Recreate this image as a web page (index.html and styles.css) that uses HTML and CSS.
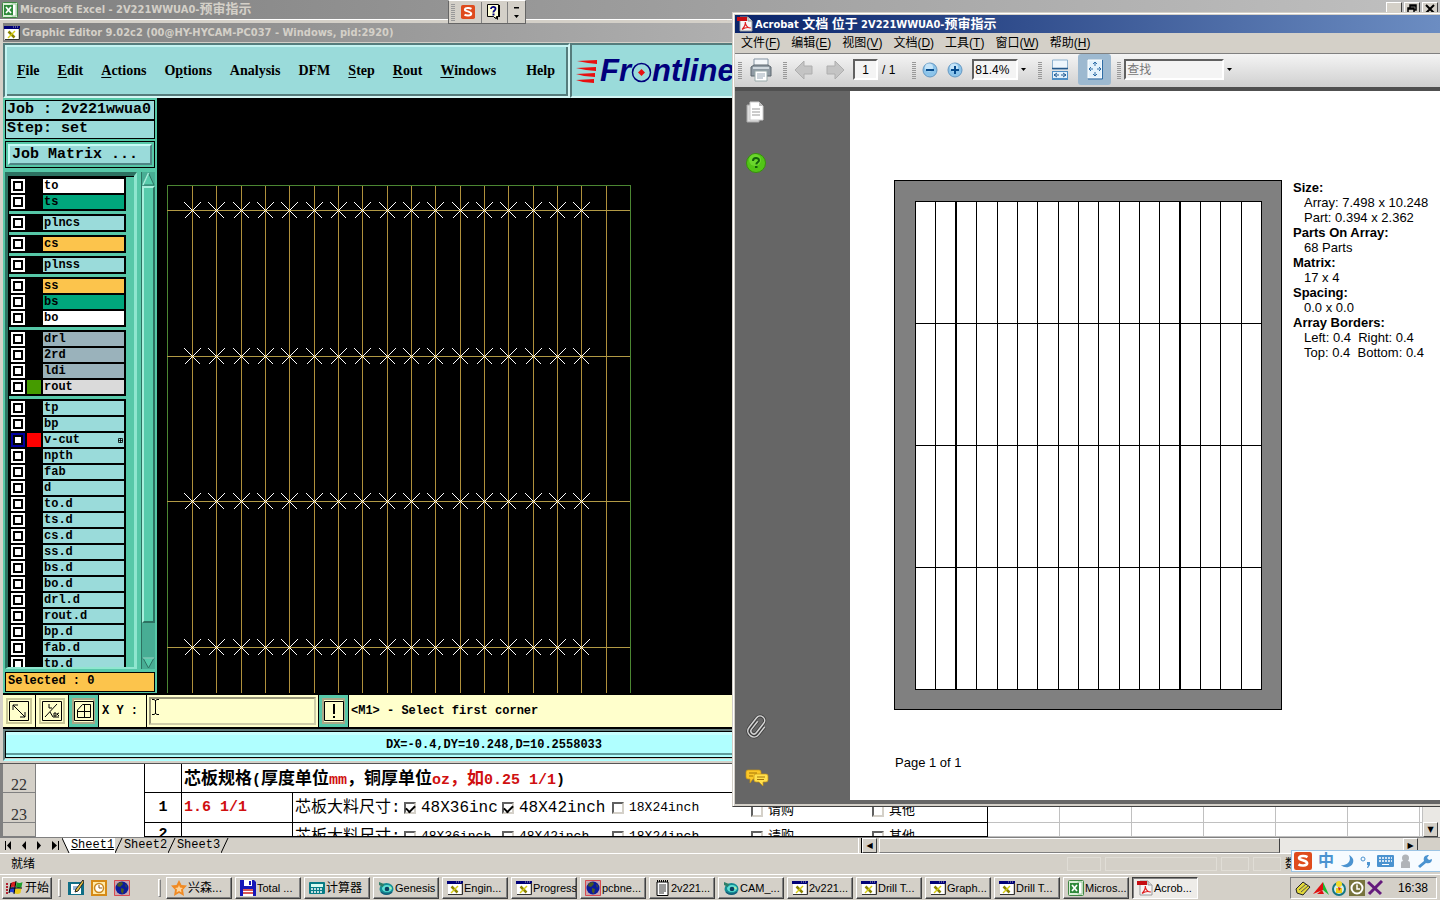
FILE: index.html
```html
<!DOCTYPE html>
<html lang="zh-CN">
<head>
<meta charset="utf-8">
<title>Desktop</title>
<link rel="stylesheet" href="styles.css">
</head>
<body>
<svg class="defs" aria-hidden="true">
  <symbol id="xwin" viewBox="0 0 16 14"><path d="M0 0h16v14H0z" fill="#d4d0c8"/><path d="M0 0h16v3H0z" fill="#000078"/><path d="M1 3h13v10H1z" fill="#fff"/><path d="M9 1h1M11 1h1M13 1h1" stroke="#aab"/><path d="M4.500 5.500l6 6" stroke="#8a8200" stroke-width="2.500"/><path d="M11 5l-7 7" stroke="#d6cd16" stroke-width="1.500"/><path d="M15.500 2v11.500H1" fill="none" stroke="#333"/></symbol>
  <symbol id="xls" viewBox="0 0 16 16"><rect x=".5" y=".5" width="15" height="15" rx="1" fill="#d9efd6" stroke="#3f8743"/><path d="M10 2h4v12h-4z" fill="#fff" stroke="#6aa66c" stroke-width=".6"/><path d="M2 3h9v10H2z" fill="#2f8a3b"/><path d="M4 5l5 6M9 5l-5 6" stroke="#fff" stroke-width="1.700"/></symbol>
  <symbol id="pdf" viewBox="0 0 16 16"><path d="M3 1h8l4 4v10H3z" fill="#f6f6f6" stroke="#9a9a9a"/><path d="M11 1v4h4" fill="#ddd" stroke="#999"/><path d="M0 1h10v4H0z" fill="#c60d12"/><path d="M5 13.500c2-2 3.500-5 3.300-7.500 0 3.500 2.500 6 5.500 6-3-1-6-.5-8.800 1.500z" fill="none" stroke="#e02020" stroke-width="1.100"/></symbol>
  <symbol id="globe" viewBox="0 0 16 16"><path d="M0 0h16v16H0z" fill="#c9a5ae"/><path d="M.5.5h15v15H.5z" fill="none" stroke="#d84a50"/><circle cx="8" cy="8" r="6.500" fill="#0b1b9a"/><path d="M4 3l4-1 1 2-3 3-3-1zM7 8l3 1-1 5-2-2zM11 4l2 2-1 2z" fill="#4a5a22"/></symbol>
  <symbol id="genesis" viewBox="0 0 16 16"><ellipse cx="8.500" cy="9" rx="7" ry="6" fill="#148c94"/><ellipse cx="9" cy="8.500" rx="5" ry="3.500" fill="#5fe0d4"/><circle cx="9" cy="9" r="2.300" fill="#0b4160"/><path d="M1 2l5 2-1 3-4-2z" fill="#2f7f68"/><path d="M3 12c3 3 8 3 11 0" stroke="#185b78" fill="none" stroke-width="1.500"/><path d="M11 7l3 1-2 1z" fill="#e6f089"/></symbol>
  <symbol id="sogou" viewBox="0 0 16 16"><rect width="16" height="16" rx="2" fill="#df4b1d"/><path d="M12 4.500C10 3.200 5 3 4.500 5.200 4.200 7.600 11.700 7 11.700 9.900 11.500 12.700 6 12.400 4 11" fill="none" stroke="#fff" stroke-width="2.300"/></symbol>
</svg>

<div class="desktop">
  <section class="excel">
    <header class="titlebar excel-title"><svg class="i16"><use href="#xls"/></svg><h1>Microsoft Excel - 2V221WWUA0-<span class="cjk">预审指示</span></h1>
      <div class="winbtns"><button aria-label="最小化"></button><button aria-label="还原"><svg width="11" height="10"><path d="M3 5V1h6v5H7M1 4h6v5H1zM3 2h6M1 5h6" fill="none" stroke="#000" stroke-width="1.500"/></svg></button><button aria-label="关闭"><svg width="10" height="10"><path d="M1 1l8 8M9 1l-8 8" stroke="#000" stroke-width="2"/></svg></button></div>
    </header>
    <div class="sheet">
      <div class="sheet-main">
      <table>
        <colgroup><col class="c-head"><col class="c-a"><col class="c-b"><col class="c-c"><col class="c-d"><col class="c-e"><col class="c-e"><col class="c-e"><col class="c-e"><col class="c-e"><col class="c-e"><col></colgroup>
        <tr class="full"><th>22</th><td class="blank"></td><td class="box"></td><td class="box spec" colspan="2">芯板规格<span class="lat">(</span>厚度单位<span class="lat red">mm</span>，铜厚单位<span class="red"><span class="lat">oz</span>，如<span class="lat">0.25 1/1</span></span><span class="lat">)</span></td><td></td><td></td><td></td><td></td><td></td><td></td><td></td></tr>
        <tr class="full"><th>23</th><td class="blank"></td><td class="box num">1</td><td class="box red lat">1.6 1/1</td><td class="box"><div class="fields"><span>芯板大料尺寸:</span><label class="big"><input type="checkbox" checked>48X36inc</label><label class="big"><input type="checkbox" checked>48X42inch</label><label><input type="checkbox">18X24inch</label><label class="low"><input type="checkbox">请购</label><label class="low"><input type="checkbox">其他</label></div></td><td></td><td></td><td></td><td></td><td></td><td></td><td></td></tr>
        <tr class="part"><th></th><td class="blank"></td><td class="box num"><div class="clip">2</div></td><td class="box"></td><td class="box"><div class="clip"><div class="fields"><span>芯板大料尺寸:</span><label><input type="checkbox">48X36inch</label><label><input type="checkbox">48X42inch</label><label><input type="checkbox">18X24inch</label><label><input type="checkbox">请购</label><label><input type="checkbox">其他</label></div></div></td><td></td><td></td><td></td><td></td><td></td><td></td><td></td></tr>
      </table>
      <div class="vscroll"><button aria-label="向下">▼</button></div>
      </div>
    </div>
    <nav class="tabs">
      <div class="tabnav"><button aria-label="首个"><svg width="9" height="9"><path d="M1 0h1v9H1zM7 0v9L3 4.500z"/></svg></button><button aria-label="上一个"><svg width="9" height="9"><path d="M6 0v9L2 4.500z"/></svg></button><button aria-label="下一个"><svg width="9" height="9"><path d="M2 0v9l4-4.500z"/></svg></button><button aria-label="末个"><svg width="9" height="9"><path d="M1 0v9l5-4.500zM7 0h1v9H7z"/></svg></button></div>
      <a class="tab on" href="#s1"><svg width="8" height="16"><path d="M0 0l7 15h1V0z" fill="#fff"/><path d="M0 0l7 15" stroke="#000"/></svg><span>Sheet1</span></a>
      <a class="tab" href="#s2"><svg width="8" height="16"><path d="M7 0L0 15" stroke="#000"/></svg><span>Sheet2</span></a>
      <a class="tab" href="#s3"><svg width="8" height="16"><path d="M7 0L0 15" stroke="#000"/></svg><span>Sheet3</span><svg width="8" height="16"><path d="M7 0L0 15" stroke="#000"/></svg></a>
      <div class="hscroll"><i class="split"></i><button aria-label="向左">◀</button><i class="thumb"></i><i class="trough"></i><button aria-label="向右">▶</button></div>
    </nav>
    <footer class="status"><span>就绪</span><div class="cells"><i></i><i class="w"></i><i class="n"></i><i class="n"></i><b>数</b></div></footer>
  </section>

  <section class="genesis">
    <header class="titlebar gen-title"><svg class="i16"><use href="#xwin"/></svg><h2>Graphic Editor 9.02c2 (00@HY-HYCAM-PC037 - Windows, pid:2920)</h2></header>
    <div class="top">
      <nav class="gmenu"><button><u>F</u>ile</button><button><u>E</u>dit</button><button><u>A</u>ctions</button><button>O<u>p</u>tions</button><button>Analysis</button><button>DFM</button><button><u>S</u>tep</button><button><u>R</u>out</button><button><u>W</u>indows</button><button class="help">Help</button></nav>
      <div class="logo"><svg width="24" height="24"><path d="M1 2l20-1v4l-9-1zM0 9l20-1v4l-10-1zM0 15l19-1v4L8 17zM0 21l18-1v4L7 23z" fill="#e81010"/></svg><span>Fr</span><svg width="21" height="24"><circle cx="10.500" cy="13.500" r="9" fill="none" stroke="#00007c" stroke-width="1.500"/><path d="M10.500 10l3.500 3.500-3.500 3.500L7 13.500z" fill="#e81010"/></svg><span>ntline</span></div>
    </div>
    <div class="work">
      <aside class="side">
        <div class="job"><div>Job : 2v221wwua0</div><div>Step: set</div></div>
        <div class="matrix"><button>Job Matrix ...</button></div>
        <div class="listbox">
          <div class="layers">
            <div class="group"><label><input type="checkbox"><i></i><span class="white">to</span></label><label><input type="checkbox"><i></i><span class="green">ts</span></label></div>
            <div class="group"><label><input type="checkbox"><i></i><span>plncs</span></label></div>
            <div class="group"><label><input type="checkbox"><i></i><span class="gold">cs</span></label></div>
            <div class="group"><label><input type="checkbox"><i></i><span>plnss</span></label></div>
            <div class="group"><label><input type="checkbox"><i></i><span class="gold">ss</span></label><label><input type="checkbox"><i></i><span class="green">bs</span></label><label><input type="checkbox"><i></i><span class="white">bo</span></label></div>
            <div class="group"><label><input type="checkbox"><i></i><span class="slate">drl</span></label><label><input type="checkbox"><i></i><span class="slate">2rd</span></label><label><input type="checkbox"><i></i><span class="slate">ldi</span></label><label><input type="checkbox"><i class="g"></i><span class="pale">rout</span></label></div>
            <div class="group"><label><input type="checkbox"><i></i><span>tp</span></label><label><input type="checkbox"><i></i><span>bp</span></label><label><input type="checkbox" checked><i class="r"></i><span>v-cut<svg width="5" height="5"><path d="M.5.5h4v4h-4zM2.500 0v5M0 2.500h5" fill="none" stroke="#000" stroke-width=".8"/></svg></span></label><label><input type="checkbox"><i></i><span>npth</span></label><label><input type="checkbox"><i></i><span>fab</span></label><label><input type="checkbox"><i></i><span>d</span></label><label><input type="checkbox"><i></i><span>to.d</span></label><label><input type="checkbox"><i></i><span>ts.d</span></label><label><input type="checkbox"><i></i><span>cs.d</span></label><label><input type="checkbox"><i></i><span>ss.d</span></label><label><input type="checkbox"><i></i><span>bs.d</span></label><label><input type="checkbox"><i></i><span>bo.d</span></label><label><input type="checkbox"><i></i><span>drl.d</span></label><label><input type="checkbox"><i></i><span>rout.d</span></label><label><input type="checkbox"><i></i><span>bp.d</span></label><label><input type="checkbox"><i></i><span>fab.d</span></label><label><input type="checkbox"><i></i><span>tp.d</span></label></div>
          </div>
          <div class="mscroll"><svg width="13" height="14"><path d="M6.500 1L1 13h11z" fill="#57cbab" stroke="#2d7262"/><path d="M6.500 1L1 13" stroke="#a8f0dc" stroke-width="1.500"/></svg><i></i><svg width="13" height="12"><path d="M6.500 11L1 1h11z" fill="#57cbab" stroke="#2d7262"/><path d="M1 1h11" stroke="#a8f0dc"/></svg></div>
        </div>
        <div class="selected">Selected : 0</div>
      </aside>
      <svg class="canvas" shape-rendering="crispEdges" fill="none">
        <defs>
          <marker id="star" markerUnits="userSpaceOnUse" markerWidth="18" markerHeight="18" refX="9" refY="9" viewBox="0 0 18 18"><path d="M1 1l16 16M17 1L1 17" stroke="#fff"/></marker>
          <g id="vrow"><path d="M9 .5h463" stroke="#b29a45"/><polyline points="34.500,.5 58.500,.5 83.500,.5 107.500,.5 131.500,.5 156.500,.5 180.500,.5 204.500,.5 229.500,.5 253.500,.5 277.500,.5 302.500,.5 326.500,.5 350.500,.5 375.500,.5 399.500,.5 423.500,.5" marker-start="url(#star)" marker-mid="url(#star)" marker-end="url(#star)"/></g>
        </defs>
        <path d="M34.500 88v600M58.500 88v600M83.500 88v600M107.500 88v600M131.500 88v600M156.500 88v600M180.500 88v600M204.500 88v600M229.500 88v600M253.500 88v600M277.500 88v600M302.500 88v600M326.500 88v600M350.500 88v600M375.500 88v600M399.500 88v600M423.500 88v600M448.500 88v600" stroke="#b0903c"/>
        <path d="M9.500 688V87.500h463V688" stroke="#4b8632"/>
        <use href="#vrow" y="112"/><use href="#vrow" y="258"/><use href="#vrow" y="403"/><use href="#vrow" y="549"/>
      </svg>
    </div>
    <div class="cmd">
      <button class="tool" aria-label="缩放"><svg width="20" height="20"><path d="M.5.5h19v19H.5zM4 4l12 12M4 9V4h5M11 16h5v-5" fill="none" stroke="#000"/></svg></button>
      <button class="tool" aria-label="测量"><svg width="20" height="20"><path d="M.5.5h19v19H.5zM3 16L15 3M7 3v4h3M8 11l3 5h6M12 12h2v3h-2zM17 12l-2 1 2 2" fill="none" stroke="#000"/></svg></button>
      <button class="tool teal" aria-label="网格"><svg width="20" height="20"><path d="M.5.5h19v19H.5zM3.500 16.500V9l5-5.500h8v13zM10.500 3v13M3 10.500h13" fill="none" stroke="#000"/></svg></button>
      <label for="xy">X Y :</label>
      <div class="xybox"><input id="xy" type="text"><svg width="7" height="16"><path d="M0 .5h2l1.500 1 1.500-1h2M0 15.500h2l1.500-1 1.500 1h2M3.500 1v14" fill="none" stroke="#000"/></svg></div>
      <button class="tool teal" aria-label="提示"><svg width="20" height="20"><path d="M.5.5h19v19H.5z" fill="none" stroke="#000"/><path d="M9 3h2v10H9zM9 15h2v2H9z"/></svg></button>
      <output>&lt;M1&gt; - Select first corner</output>
    </div>
    <div class="coords"><div>DX=-0.4,DY=10.248,D=10.2558033</div></div>
  </section>

  <section class="acrobat">
    <header class="titlebar acro-title"><svg class="i16"><use href="#pdf"/></svg><h2>Acrobat <span class="cjk">文档</span> <span class="cjk">位于</span> 2V221WWUA0-<span class="cjk">预审指示</span></h2></header>
    <nav class="amenu"><button>文件(<u>F</u>)</button><button>编辑(<u>E</u>)</button><button>视图(<u>V</u>)</button><button>文档(<u>D</u>)</button><button>工具(<u>T</u>)</button><button>窗口(<u>W</u>)</button><button>帮助(<u>H</u>)</button></nav>
    <div class="atools">
      <i class="grip"></i>
      <button class="print" aria-label="打印"><svg width="24" height="24"><path d="M5 1h14v9H5z" fill="#f4f7fa" stroke="#8494a2"/><path d="M2 9l3-2h14l3 2v9H2z" fill="#909ba4" stroke="#5d676f"/><path d="M4 9h16v2H4z" fill="#d0d8de"/><path d="M6 13h12v10H6z" fill="#fff" stroke="#9aa"/><path d="M8 16h8M8 18h8M8 20h6" stroke="#99a8b5"/></svg></button>
      <i class="grip"></i>
      <button class="back" aria-label="上一页"><svg width="18" height="20"><path d="M0 10l9-9v5h8v8H9v5z" fill="#c4c4c4" stroke="#aeaeae"/></svg></button>
      <button class="fwd" aria-label="下一页"><svg width="18" height="20"><path d="M18 10L9 1v5H1v8h8v5z" fill="#c4c4c4" stroke="#aeaeae"/></svg></button>
      <input class="pg" type="text" value="1" aria-label="页码"><span class="of">/ 1</span>
      <i class="grip"></i>
      <button class="zm" aria-label="缩小"><svg width="16" height="16"><circle cx="8" cy="8" r="7" fill="#8cc4ea" stroke="#6598c2"/><circle cx="7" cy="5.500" r="4" fill="#c5e4f8"/><path d="M4 8h8" stroke="#074b8c" stroke-width="2"/></svg></button>
      <button class="zp" aria-label="放大"><svg width="16" height="16"><circle cx="8" cy="8" r="7" fill="#8cc4ea" stroke="#6598c2"/><circle cx="7" cy="5.500" r="4" fill="#c5e4f8"/><path d="M4 8h8M8 4v8" stroke="#074b8c" stroke-width="2"/></svg></button>
      <input class="zoom" type="text" value="81.4%" aria-label="缩放比例"><button class="dd" aria-label="缩放列表"><svg width="5" height="3"><path d="M0 0h5L2.500 3z"/></svg></button>
      <i class="grip"></i>
      <button class="fitw" aria-label="适合宽度"><svg width="18" height="21"><path d="M1.500 1h15v9h-15z" fill="#eef6fd" stroke="#8fb2cf"/><path d="M1 9.500h16" stroke="#24598c" stroke-width="1.500"/><path d="M1 12h16v9H1z" fill="#4f8fc6"/><path d="M2 13h14v6H2z" fill="#e4f1fb"/><path d="M3 16h5M10 16h5M6 14l-3 2 3 2M12 14l3 2-3 2" fill="none" stroke="#245c94"/></svg></button>
      <button class="fitp" aria-label="适合页面"><svg width="16" height="21"><path d="M1 1h14v18H1z" fill="#e3f2fc" stroke="#fff"/><path d="M15.500 1v19H1" fill="none" stroke="#2e6da6"/><path d="M8 3v4M8 13v4M2 10h4M10 10h4M6 5l2-2 2 2M6 15l2 2 2-2M4 8l-2 2 2 2M12 8l2 2-2 2" fill="none" stroke="#2e6da6"/></svg></button>
      <i class="grip"></i>
      <input class="find" type="text" placeholder="查找" aria-label="查找"><button class="dd" aria-label="查找选项"><svg width="5" height="3"><path d="M0 0h5L2.500 3z"/></svg></button>
    </div>
    <div class="abody">
      <aside class="anav">
        <button aria-label="页面"><svg width="22" height="24"><path d="M2 5h12v17H2z" fill="#ddd" stroke="#aaa"/><path d="M5 2h9l4 4v14H5z" fill="#fff" stroke="#ccc"/><path d="M14 2v4h4" fill="#bbb"/><path d="M7 9h8M7 12h8M7 15h8" stroke="#999"/></svg></button>
        <button aria-label="帮助"><svg width="22" height="22"><circle cx="11" cy="11" r="9.500" fill="#52c516" stroke="#36910c"/><circle cx="10" cy="8" r="6" fill="#7be33c" opacity=".6"/><path d="M8 9c0-4 6-3.500 6-.7 0 2-2.500 1.900-2.700 4" fill="none" stroke="#12600a" stroke-width="2"/><path d="M10 14h2.500v2H10z" fill="#12600a"/></svg></button>
        <button class="clip-i" aria-label="附件"><svg width="24" height="26"><g fill="none" transform="rotate(38 12 13)"><path id="pc" d="M9 8v10c0 4 6 4 6 0V6c0-6-9-6-9 0v12c0 8 12 8 12 0V8" stroke="#3c3c3c" stroke-width="3"/><path d="M9 8v10c0 4 6 4 6 0V6c0-6-9-6-9 0v12c0 8 12 8 12 0V8" stroke="#d4d4d4" stroke-width="1.500"/></g></svg></button>
        <button aria-label="注释"><svg width="24" height="20"><path d="M3 2h11q2 0 2 2v5q0 2-2 2H8l-3 4v-4H3q-2 0-2-2V4q0-2 2-2z" fill="#fbc728" stroke="#c69312" stroke-width=".7"/><path d="M11 6h10q2 0 2 2v4q0 2-2 2h-3v4l-4-4h-3q-2 0-2-2V8q0-2 2-2z" fill="#ffe04e" stroke="#c69312" stroke-width=".7"/><path d="M4 5h8M4 8h4M12 9h8M12 11.500h7" stroke="#a37408"/></svg></button>
      </aside>
      <main class="page">
        <div class="sheetrow">
          <svg class="array" width="388" height="530" shape-rendering="crispEdges"><path d="M.5.5h387v529H.5z" fill="#808080" stroke="#000"/><path d="M21.500 21.500h346v488h-346z" fill="#fff" stroke="#000"/><path d="M41.500 21v488M82.500 21v488M103.500 21v488M123.500 21v488M143.500 21v488M164.500 21v488M184.500 21v488M204.500 21v488M225.500 21v488M245.500 21v488M265.500 21v488M306.500 21v488M326.500 21v488M347.500 21v488M21 143.500h346M21 265.500h346M21 387.500h346" stroke="#000"/><path d="M62 21v488M286 21v488" stroke="#000" stroke-width="2"/></svg>
          <dl><dt>Size:</dt><dd>Array: 7.498 x 10.248</dd><dd>Part: 0.394 x 2.362</dd><dt>Parts On Array:</dt><dd>68 Parts</dd><dt>Matrix:</dt><dd>17 x 4</dd><dt>Spacing:</dt><dd>0.0 x 0.0</dd><dt>Array Borders:</dt><dd>Left: 0.4&nbsp; Right: 0.4</dd><dd>Top: 0.4&nbsp; Bottom: 0.4</dd></dl>
        </div>
        <p>Page 1 of 1</p>
      </main>
    </div>
  </section>

  <div class="langbar"><i class="grip"></i><button aria-label="搜狗"><svg width="14" height="14"><use href="#sogou"/></svg></button><button class="sep" aria-label="帮助"><svg width="16" height="17"><path d="M3 1h11v12h-2v3l-4-3H3z" fill="#000"/><path d="M1.500.5h11v12h-2l-1 2-2-2h-6z" fill="#ffffd8" stroke="#000"/><path d="M5 5c0-3 5-2.500 4.500 0C9.300 6.500 7.500 6.500 7.300 8.500" fill="none" stroke="#00007c" stroke-width="1.800"/><path d="M6.500 9.500h2v2h-2z" fill="#00007c"/></svg></button><button class="sep last" aria-label="选项"><svg width="5" height="11"><path d="M0 0h5v1.500H0zM0 8h5L2.500 11z"/></svg></button></div>

  <div class="ime"><svg width="18" height="18"><use href="#sogou"/></svg><b>中</b><svg width="14" height="14"><path d="M9 1c3 6-2 11-8 10 5 5 14 1 12-6-1-2-2-3-4-4z" fill="#4b93d0"/></svg><svg width="11" height="13"><circle cx="3" cy="4" r="2" fill="none" stroke="#4b93d0"/><path d="M7 7h3v3l-2 3H7l1-3H7z" fill="#4b93d0"/></svg><svg width="17" height="12"><rect width="17" height="12" rx="1" fill="#4b93d0"/><path d="M2 3h13M2 6h13" stroke="#fff" stroke-width="1.500" stroke-dasharray="2 1"/><path d="M5 9.500h7" stroke="#fff"/></svg><svg width="11" height="14"><circle cx="5.500" cy="4" r="3.500" fill="#b0b4b8"/><path d="M1 14V9q0-2 2-2h5q2 0 2 2v5z" fill="#b0b4b8"/></svg><svg width="15" height="14"><path d="M1 12l6-5c-1-4 1-6 5-6l-2 3 2 2 3-1c0 4-3 5-6 4l-6 5z" fill="#4b93d0"/></svg></div>
</div>

<footer class="taskbar">
  <button class="start"><svg width="17" height="15"><path d="M5 3q3-2 5-1l-1 5q-3-1-5 1z" fill="#d62020"/><path d="M10.500 2q3 2 6 0l-1 5q-3 2-5.500 0z" fill="#1fa02c"/><path d="M4 8.500q3-2 5-.5l-1 5q-3-2-5 0z" fill="#2040d0"/><path d="M9.500 8q3 2 6 0l-1 5q-3 2-6 0z" fill="#e8c81c"/><path d="M10 1L8 14M5 3L3 13M4 8h12" stroke="#000"/><path d="M0 4h2M0 7h2M0 10h2M0 13h2" stroke="#b02030" stroke-width="2"/></svg>开始</button>
  <i class="bar"></i>
  <div class="quick">
    <button aria-label="显示桌面"><svg class="i16" viewBox="0 0 16 16"><path d="M0 2h16v13H0z" fill="#0f6e86"/><path d="M3 4h10v10H3z" fill="#fff"/><path d="M5 7h6M5 9h5" stroke="#2b70b4"/><path d="M15 0L8 9l-1 3 3-1 6-9z" fill="#e2bd45" stroke="#222"/></svg></button>
    <button aria-label="Outlook"><svg class="i16" viewBox="0 0 16 16"><rect x="1" y="1" width="14" height="14" fill="#ffe9a8" stroke="#d68a16" stroke-width="2"/><circle cx="8" cy="8" r="4.500" fill="#fff" stroke="#cb8820" stroke-width="1.500"/><path d="M8 5v3h3" fill="none" stroke="#8f5a10"/></svg></button>
    <button aria-label="浏览器"><svg class="i16"><use href="#globe"/></svg></button>
  </div>
  <i class="bar"></i>
  <div class="tasks">
    <button class="zh"><svg class="i16" viewBox="0 0 16 16"><path d="M8 0l2.500 5 5.500.5-4 4.200 1 6.300-5-3-5 3 1-6.300L0 5.500 5.500 5z" fill="#f08a24"/><path d="M8 5l1 2.500 3 .5-2 1.500.5 3L8 11l-2.500 1.500.5-3L4 8l3-.5z" fill="#ffd49a"/></svg>兴森...</button>
    <button><svg class="i16" viewBox="0 0 16 16"><path d="M0 0h14l2 2v14H0z" fill="#1717b8"/><path d="M4 0h8v6H4z" fill="#fff"/><path d="M9 1h2v4H9z" fill="#1717b8"/><path d="M3 9h10v7H3z" fill="#fff"/><path d="M3 10h10M3 13h10" stroke="#c22" stroke-width="1.500"/></svg>Total ...</button>
    <button class="zh"><svg class="i16" viewBox="0 0 16 16"><rect y="2" width="16" height="12" rx="1" fill="#087c86"/><path d="M2 4h12v3H2z" fill="#d6fbf1"/><path d="M2 9h12M2 12h12" stroke="#fff" stroke-width="1.500" stroke-dasharray="2 1"/></svg>计算器</button>
    <button><svg class="i16"><use href="#genesis"/></svg>Genesis</button>
    <button><svg class="i16"><use href="#xwin"/></svg>Engin...</button>
    <button><svg class="i16"><use href="#xwin"/></svg>Progress</button>
    <button><svg class="i16"><use href="#globe"/></svg>pcbne...</button>
    <button><svg class="i16" viewBox="0 0 16 16"><path d="M3 2h11v13.500H3z" fill="#fff" stroke="#000"/><path d="M3 1h11" stroke="#000" stroke-width="2" stroke-dasharray="1 1"/><path d="M5 5h7M5 7h7M5 9h7M5 11h7M5 13h5" stroke="#000" stroke-width=".8"/></svg>2v221...</button>
    <button><svg class="i16"><use href="#genesis"/></svg>CAM_...</button>
    <button><svg class="i16"><use href="#xwin"/></svg>2v221...</button>
    <button><svg class="i16"><use href="#xwin"/></svg>Drill T...</button>
    <button><svg class="i16"><use href="#xwin"/></svg>Graph...</button>
    <button><svg class="i16"><use href="#xwin"/></svg>Drill T...</button>
    <button><svg class="i16"><use href="#xls"/></svg>Micros...</button>
    <button class="down"><svg class="i16"><use href="#pdf"/></svg>Acrob...</button>
  </div>
  <div class="tray">
    <svg class="i16" viewBox="0 0 16 16"><path d="M1 9l7-7 7 5-7 8-6-2z" fill="#e2d83a" stroke="#222"/><path d="M4 10l7-6M6 12l7-6" stroke="#555"/></svg>
    <svg class="i16" viewBox="0 0 16 16"><path d="M0 14L10 2v8z" fill="#e01010"/><path d="M10 2v8l6 5z" fill="#18b830"/><path d="M4 14l5-4 2 4z" fill="#e01010"/></svg>
    <svg class="i16" viewBox="0 0 16 16"><circle cx="8" cy="9" r="6" fill="#d4eeea" stroke="#157682" stroke-width="2"/><path d="M5 8h6v5H5z" fill="#eccd19"/><circle cx="8" cy="4" r="3" fill="#f0db2c"/><path d="M7 7l3 1-2 3z" fill="#d52118"/></svg>
    <svg class="i16" viewBox="0 0 16 16"><path d="M0 0h16v16H0z" fill="#77733c"/><circle cx="8" cy="8" r="5.500" fill="none" stroke="#fff" stroke-width="2"/><path d="M8 4.500V9h3" fill="none" stroke="#fff" stroke-width="1.500"/></svg>
    <svg class="i16" viewBox="0 0 16 16"><path d="M1 2l13 12M15 1L2 14" stroke="#641a7c" stroke-width="3"/></svg>
    <time>16:38</time>
  </div>
</footer>
</body>
</html>
```
FILE: styles.css
```css
* { box-sizing: border-box; }
body {
  margin: 0; height: 100vh; overflow: hidden; display: flex; flex-direction: column;
  background: #d4d0c8; color: #000;
  font: 12px/14px "Liberation Sans", "Noto Sans CJK SC", sans-serif;
}
button { border: 0; padding: 0; background: none; color: inherit; font: inherit; white-space: nowrap; }
svg { display: block; flex: none; }
input { margin: 0; }
h1, h2, p, dl, dd { margin: 0; }
.defs { position: absolute; width: 0; height: 0; }
.i16 { width: 16px; height: 16px; }
.desktop { flex: 1; min-height: 0; position: relative; }

.titlebar { display: flex; align-items: center; gap: 2px; flex: none; }
.titlebar h1, .titlebar h2 { font: bold 11px/16px "DejaVu Sans Condensed", "Liberation Sans", "Noto Sans CJK SC", sans-serif; white-space: nowrap; }
.cjk { font-size: 13px; }

/* Excel */
.excel { height: 100%; display: flex; flex-direction: column; }
.excel-title { height: 19px; padding-left: 2px; color: #d4d0c8; background: linear-gradient(90deg, #808080, #c0c0c0); }
.winbtns { margin-left: auto; display: flex; gap: 2px; padding-right: 2px; align-self: flex-start; padding-top: 2px; }
.winbtns button { width: 16px; height: 14px; padding: 1px 2px; background: #d4d0c8; border: 1px solid; border-color: #fff #404040 #404040 #fff; }
.sheet { flex: 1; min-height: 0; display: flex; flex-direction: column; justify-content: flex-end; background: #fff; border-left: 2px solid #808080; }
.sheet-main { display: flex; }
.sheet table { flex: 1; min-width: 0; table-layout: fixed; border-collapse: collapse; font-family: "Liberation Mono", "Noto Sans CJK SC", monospace; }
.c-head { width: 33px; } .c-a { width: 109px; } .c-b { width: 37px; } .c-c { width: 111px; } .c-d { width: 695px; } .c-e { width: 72px; }
.sheet td { border: 1px solid #c0c0c0; padding: 0; white-space: nowrap; overflow: hidden; }
.sheet td.blank { border-color: #fff; }
.sheet td.box { border-color: #000; border-left-style: double; padding-left: 2px; }
.full { height: 30px; } .part { height: 14px; }
.sheet th { background: #d4d0c8; border: 1px solid #808080; font: 16px/14px "Liberation Serif", serif; vertical-align: bottom; padding: 0; color: #333; }
.sheet td.spec { font-size: 17px; line-height: 20px; font-weight: bold; padding-top: 5px; }
.sheet .lat { font-size: 15px; font-weight: bold; }
.sheet .red { color: #d01010; }
.sheet td.num { text-align: center; font-size: 15px; font-weight: bold; padding: 0; }
.clip { height: 12px; overflow: hidden; padding-top: 4px; }
.fields { display: grid; grid-template-columns: 109px 98px 110px 139px 121px 1fr; align-items: center; font-size: 13px; line-height: 18px; }
.fields > span { font-size: 16px; }
.fields label { display: flex; align-items: center; gap: 5px; }
.fields .big { font-size: 16px; }
.fields .low { padding-top: 6px; }
.fields input { appearance: none; width: 12px; height: 12px; flex: none; background: #fff; border: 2px solid; border-color: #606060 #d4d0c8 #d4d0c8 #606060; display: grid; place-items: center; }
.fields input:checked::after { content: ""; width: 7px; height: 4px; border: solid #000; border-width: 0 0 2px 2px; transform: rotate(-45deg); }
.vscroll { width: 17px; display: flex; align-items: flex-end; background: #eae8e4; }
.vscroll button, .hscroll button { width: 15px; height: 15px; background: #d4d0c8; border: 1px solid; border-color: #fff #404040 #404040 #fff; font: 8px/12px "DejaVu Sans", sans-serif; flex: none; }
.tabs { height: 16px; flex: none; display: flex; border-top: 1px solid #808080; }
.tabnav { display: flex; width: 62px; padding-left: 4px; justify-content: space-between; align-items: center; padding-right: 2px; }
.tab { display: flex; color: #000; text-decoration: none; font: 12px/15px "Liberation Mono", monospace; }
.tab.on span { background: #fff; text-decoration: underline; }
.tab span { width: 45px; text-align: center; }
.hscroll { flex: 0 0 582px; margin-left: auto; display: flex; padding-right: 22px; }
.hscroll .split { width: 4px; border: solid #fff; border-width: 0 0 0 1px; border-right: 1px solid #000; }
.hscroll .thumb { flex: 1; margin-left: 2px; border: 1px solid; border-color: #fff #404040 #808080 #fff; }
.hscroll .trough { width: 123px; background: #eae8e4; }
.status { height: 21px; flex: none; display: flex; align-items: center; padding-left: 11px; border-top: 1px solid #fff; }
.cells { margin-left: auto; display: flex; gap: 4px; padding-right: 143px; }
.cells i { width: 34px; height: 14px; border: 1px solid #e0ddd6; }
.cells i.w { width: 112px; } .cells i.n { width: 28px; }
.cells b { font-weight: normal; }

/* Graphic editor */
.genesis { position: absolute; left: 0; top: 19px; bottom: 110px; width: calc(100% - 452px); display: flex; flex-direction: column; background: #d4d0c8; padding: 3px 3px 2px; border-top: 1px solid #fff; border-bottom: 1px solid #555; }
.gen-title { height: 19px; padding-left: 1px; color: #d4d0c8; background: linear-gradient(90deg, #808080, #c0c0c0); }
.gen-title svg { height: 14px; }
.top { display: flex; height: 56px; flex: none; border-top: 1px solid #d4d0c8; }
.gmenu, .logo { background: #9adbda; border: 2px solid; border-color: #557c7c #d4f6f4 #d4f6f4 #557c7c; }
.gmenu { flex: 0 0 567px; display: flex; align-items: center; gap: 18px; padding: 0 13px 0 12px; font: bold 14px/18px "Liberation Serif", serif; box-shadow: inset 2px 2px #c4f4f2, inset -2px -2px #557c7c; }
.gmenu u, .amenu u { text-underline-offset: 2px; }
.help { margin-left: auto; }
.logo { flex: 1; display: flex; align-items: center; padding-left: 4px; color: #00007c; font: italic bold 31px/40px "Liberation Sans", sans-serif; }
.work { flex: 1; min-height: 0; display: flex; background: #000; font-family: "Liberation Mono", monospace; }
.side { width: 154px; display: flex; flex-direction: column; background: #57c8a8; padding: 2px 2px 1px; }
.job div { height: 20px; border: 1px solid #000; background: #9adbda; font-size: 15px; line-height: 18px; padding-left: 1px; white-space: nowrap; font-weight: bold; }
.job div + div { height: 19px; line-height: 16px; }
.matrix { margin: 2px 0; padding: 2px; height: 27px; border: 1px solid #000; display: flex; }
.matrix button { flex: 1; background: #9adbda; border: 2px solid; border-color: #c8fbf6 #4f8585 #4f8585 #c8fbf6; text-align: left; padding-left: 2px; font-weight: bold; font-size: 15px; line-height: 16px; }
.listbox { flex: 1; min-height: 0; display: flex; margin: 2px 0 0; }
.layers { flex: 1; min-width: 0; overflow: hidden; display: flex; flex-direction: column; gap: 3px; padding: 1px 2px 0 1px; border: solid; border-width: 4px 3px 2px 3px; border-color: #2d7262 #8fe6cf #8fe6cf #2d7262; box-shadow: inset 1px 1px #000; margin-right: 4px; }
.group { flex: none; display: flex; flex-direction: column; gap: 2px; background: #000; padding: 2px; margin-right: 6px; }
.group label { display: flex; gap: 2px; height: 14px; }
.group input { appearance: none; width: 14px; height: 14px; background: #fff; border: 2px solid #fff; outline: 2px solid #000; outline-offset: -4px; }
.group input:checked { border-color: #0000a0; }
.group i { width: 14px; } .group i.g { background: #459b00; } .group i.r { background: #f00; }
.group span { flex: 1; display: flex; align-items: center; justify-content: space-between; padding: 0 1px; font-weight: bold; line-height: 14px; background: #9adbda; }
.group .white { background: #fff; } .group .green { background: #00a67c; } .group .gold { background: #fcc44c; } .group .slate { background: #9ab2bb; } .group .pale { background: #dadada; }
.mscroll { width: 14px; display: flex; flex-direction: column; background: #48ad94; border-left: 1px solid #2d7262; }
.mscroll i { flex: 1; background: #57cbab; border: 2px solid; border-color: #a8f0dc #2d7262 #2d7262 #a8f0dc; margin-bottom: 34px; }
.selected { margin-top: 3px; height: 20px; border: 1px solid #000; background: #fcc44c; padding-left: 2px; font-weight: bold; line-height: 16px; }
.canvas { flex: 1; min-width: 0; width: 100%; height: 100%; margin-left: 1px; }
.cmd { height: 36px; flex: none; display: flex; padding: 2px 0; gap: 1px; background: #000; font: bold 12px/14px "Liberation Mono", monospace; }
.tool { width: 32px; flex: none; display: grid; place-items: center; background: #ffffcc; box-shadow: inset 0 0 0 3px #ffffcc, inset 0 0 0 5px #c9c798; }
.tool.teal { width: 29px; box-shadow: inset 0 0 0 3px #57c8a8, inset 0 0 0 5px #aaa888; }
.cmd label { width: 47px; flex: none; display: flex; align-items: center; padding-left: 3px; background: #ffffcc; white-space: nowrap; }
.xybox { flex: 0 0 171px; position: relative; display: flex; padding: 2px; background: #ffffcc; }
.xybox input { width: 100%; padding: 0 8px; font: inherit; background: #ffffcc; border: 2px solid; border-color: #99977a #d0ceaa #d0ceaa #99977a; border-radius: 0; }
.xybox svg { position: absolute; left: 5px; top: 4px; }
.cmd output { flex: 1; display: flex; align-items: center; padding-left: 2px; background: #ffffcc; }
.coords { flex: none; height: 32px; border: 2px solid; border-color: #667f7f #b0ffff #b0ffff #667f7f; font: bold 12px/14px "Liberation Mono", monospace; }
.coords div { height: 27px; display: grid; place-items: center; background: #b0ffff; border: 1px solid #000; box-shadow: inset 0 -2px #b0ffff, inset 0 -4px #5f9c9c, inset 0 3px #c8ffff; }

/* Acrobat */
.acrobat { position: absolute; left: 732px; right: 0; top: 12px; bottom: 67px; display: flex; flex-direction: column; background: #d4d0c8; border: solid; border-width: 1px 0 1px 1px; border-color: #d4d0c8 #d4d0c8 #404040; padding: 2px 0 2px 2px; box-shadow: inset 1px 1px #fff; }
.acro-title { height: 18px; padding-left: 2px; color: #fff; background: linear-gradient(90deg, #0a246a, #6c8dc2); }
.amenu { height: 21px; flex: none; display: flex; gap: 11px; padding-left: 6px; align-items: center; border-bottom: 1px solid #808080; }
.atools { height: 33px; flex: none; display: flex; align-items: center; padding: 0 0 2px 3px; background: linear-gradient(#f4f4f4, #d0d0d0); }
.grip { width: 4px; height: 18px; flex: none; background: repeating-linear-gradient(transparent 0 1px, #999 1px 2px); }
.print { margin: 0 10px 0 7px; }
.back { margin: 0 13px 0 8px; }
.fwd { margin-right: 9px; }
.atools input { height: 21px; padding: 0 1px; border: 2px solid; border-color: #606060 #fff #fff #606060; background: #f4f4f4; font: 12px/16px "Liberation Sans", "Noto Sans CJK SC", sans-serif; border-radius: 0; }
.atools .pg { width: 25px; text-align: center; }
.of { margin: 0 17px 0 4px; }
.zm { margin: 0 9px 0 6px; } .zp { margin-right: 9px; }
.atools .zoom { width: 46px; }
.dd { margin: 0 12px 0 3px; }
.fitw { margin: 0 9px; }
.fitp { width: 33px; height: 31px; margin-right: 6px; background: #9db9d0; border-radius: 3px; display: grid; place-items: center; }
.atools .find { width: 100px; margin-left: 3px; }
.find::placeholder { color: #777; }
.abody { flex: 1; min-height: 0; display: flex; background: #666; border-top: 4px solid #505050; padding-bottom: 4px; }
.anav { width: 115px; flex: none; display: flex; flex-direction: column; align-items: flex-start; gap: 28px; padding: 9px 10px 12px; }
.anav .clip-i { margin-top: auto; }
.page { flex: 1; min-width: 0; background: #fff; padding: 89px 0 0 44px; font-size: 13px; line-height: 15px; white-space: nowrap; overflow: hidden; }
.sheetrow { display: flex; gap: 11px; }
.page dt { font-weight: bold; } .page dd { padding-left: 11px; }
.page p { margin: 45px 0 0 1px; }

/* Floating input bars */
.langbar { position: absolute; left: 448px; top: 0; width: 78px; height: 24px; display: flex; align-items: center; background: #d4d0c8; border: 1px solid #666; border-top-color: #fff; padding-left: 2px; }
.langbar button { width: 27px; height: 21px; display: grid; place-items: center; }
.langbar .sep { border-left: 1px solid #808080; } .langbar .last { width: 19px; }
.ime { position: absolute; right: 0; bottom: 2px; width: 149px; height: 22px; display: flex; align-items: center; gap: 6px; padding-left: 2px; background: #f6fbff; border: 1px solid #9cc4e4; border-right: 0; }
.ime b { color: #4b93d0; font-size: 16px; line-height: 18px; }

/* Taskbar */
.taskbar { height: 26px; flex: none; display: flex; align-items: center; padding: 0 3px 0 2px; border-top: 1px solid #fff; background: #d4d0c8; }
.start, .tasks button { height: 22px; display: flex; align-items: center; border: 1px solid; border-color: #fff #404040 #404040 #fff; box-shadow: inset -1px -1px #808080; }
.start { width: 50px; gap: 2px; padding-left: 3px; }
.bar { width: 3px; height: 18px; margin: 0 5px 0 6px; border: 1px solid; border-color: #fff #808080 #808080 #fff; flex: none; }
.quick { display: flex; gap: 7px; width: 86px; padding-left: 2px; }
.tasks { flex: 1; min-width: 0; display: flex; gap: 3px; }
.tasks button { flex: 0 1 66px; min-width: 0; overflow: hidden; gap: 1px; padding-left: 4px; font-size: 11px; }
.tasks .zh { font-size: 12px; }
.tasks .down { background: #eeece8; border-color: #404040 #fff #fff #404040; box-shadow: inset 1px 1px #808080; }
.tray { width: 147px; height: 22px; display: flex; align-items: center; gap: 2px; padding-left: 4px; border: 1px solid; border-color: #808080 #fff #fff #808080; }
.tray time { margin-left: 13px; }
```
